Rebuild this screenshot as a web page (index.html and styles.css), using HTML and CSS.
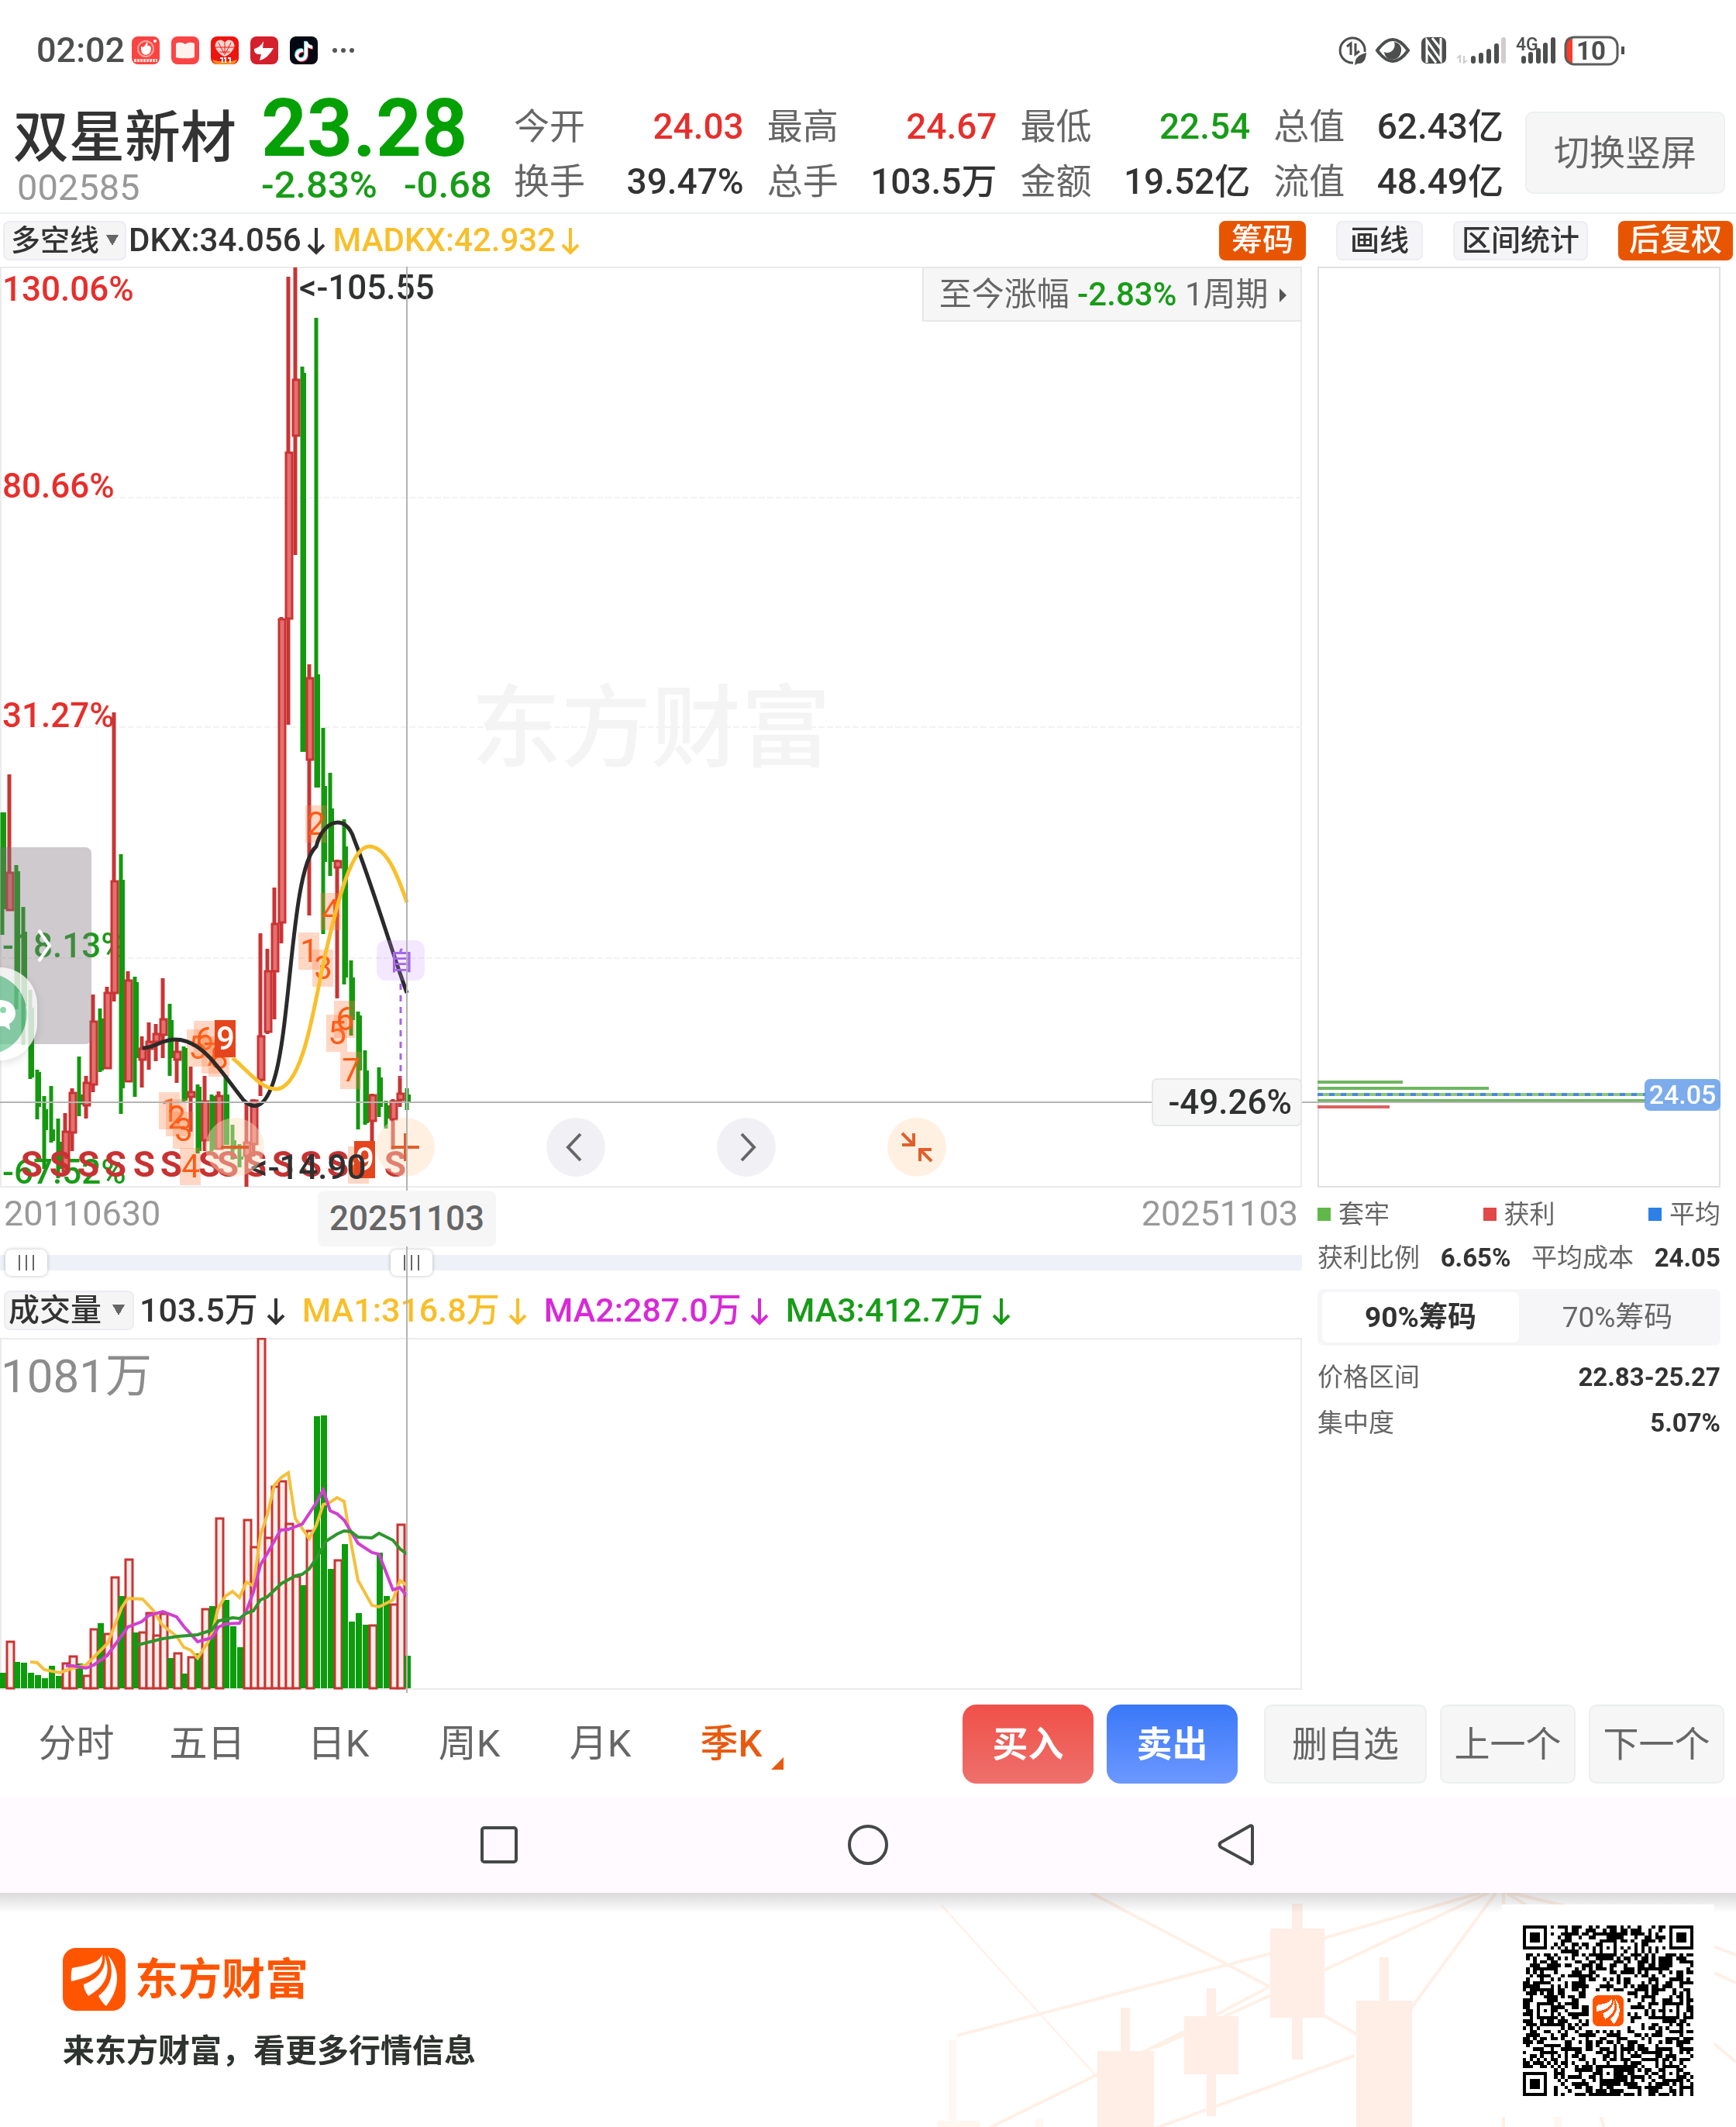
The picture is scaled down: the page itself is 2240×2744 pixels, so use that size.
FILE: index.html
```
<!DOCTYPE html>
<html lang="zh-CN">
  <head>
    <meta charset="utf-8" />
    <meta name="viewport" content="width=device-width, initial-scale=1.0" />
    <title>双星新材 002585</title>
    <link rel="stylesheet" href="styles.css" />
  </head>
  <body>
    <!-- shared symbols -->
    <svg width="0" height="0" class="defs">
      <symbol id="arrow" viewBox="0 0 26 36">
        <path d="M13 1v32M3 23l10 10 10-10" fill="none" stroke="currentColor" stroke-width="4" />
      </symbol>
      <symbol id="logo" viewBox="0 0 81 81">
        <rect width="81" height="81" rx="17" fill="#ff5500" />
        <path
          fill="#fff"
          d="M51 8C47 20 31 22 12 26Q10 34 11 43C35 38 53 30 51 8zM54 9C57 26 46 40 27 47Q27 54 33 62C52 51 64 36 54 9zM58 9C68 32 62 50 46 62Q51 71 56 75C70 58 78 32 58 9z" />
      </symbol>
    </svg>

    <div class="status-bar">
      <span class="clock">02:02</span>
      <div class="app-icons">
        <svg viewBox="0 0 36 36">
          <rect width="36" height="36" rx="8" fill="#fa4442" />
          <circle cx="18" cy="16" r="10" fill="none" stroke="#ffa49c" stroke-width="2" />
          <path d="M12 13q2 1 4 0l4-6q1 3 0 5 4-1 5 3 0 8-7 9-7-1-6-11z" fill="#fff" />
          <circle cx="30" cy="6" r="2" fill="#fff" />
          <path d="M3 31h30" stroke="#ffd8d0" stroke-width="4" stroke-dasharray="3 1" />
        </svg>
        <svg viewBox="0 0 36 36">
          <rect width="36" height="36" rx="8" fill="#fb4446" />
          <path d="M6 9q7-3 12 1 5-4 12-1v18q-7 2-12 1-5 1-12-1z" fill="#fff2ee" />
        </svg>
        <svg viewBox="0 0 36 36">
          <rect width="36" height="36" rx="8" fill="#ee1410" />
          <path d="M2 30q16 5 32 0-2 6-8 6H10q-6 0-8-6z" fill="#ff8a20" />
          <path d="M18 8q4-6 10-2 5 6 0 12-4 6-10 8-6-2-10-8-5-6 0-12 6-4 10 2z" fill="#ffd3cc" />
          <path d="M10 8l7 14M26 8l-7 14M6 14h24M11 20h14M18 8v16" stroke="#ee1410" stroke-width="1" />
          <path d="M12 28h3v6M17 28h2v6M22 28h3v6" fill="none" stroke="#fff" stroke-width="2" />
        </svg>
        <svg viewBox="0 0 36 36">
          <rect width="36" height="36" rx="8" fill="#d4202c" />
          <path d="M17 6l-1 9 14 0Q22 29 12 31l2-8Q4 24 5 16 13 14 17 6z" fill="#fff" />
        </svg>
        <svg viewBox="0 0 36 36">
          <rect width="36" height="36" rx="8" fill="#050812" />
          <g fill="none" stroke-width="4">
            <path d="M16 17q-8 0-8 7 1 5 6 5 6-1 6-7V6q1 6 8 7" stroke="#3ce8e4" />
            <path d="M18 19q-8 0-8 7 1 5 6 5 6-1 6-7V8q1 6 8 7" stroke="#f0305c" />
            <path d="M17 18q-8 0-8 7 1 5 6 5 6-1 6-7V7q1 6 8 7" stroke="#fff" />
          </g>
        </svg>
        <svg viewBox="0 0 36 36">
          <g fill="#555">
            <circle cx="7" cy="18" r="3" />
            <circle cx="18" cy="18" r="3" />
            <circle cx="29" cy="18" r="3" />
          </g>
        </svg>
      </div>
      <svg class="device-icons" viewBox="0 0 376 40">
        <g fill="none" stroke="#4c4f4d" stroke-width="3">
          <path d="M20 36A16 16 0 1 1 35 22" />
          <path d="M12 15l5-4v15M23 11v14l5-4" />
          <path d="M51 20Q71-8 91 20 71 48 51 20z" stroke-width="4" />
        </g>
        <path d="M23 33q2-7 14-10-1 15-11 14l-4 2z" fill="#4c4f4d" />
        <path d="M73 9q10 2 9 12-2 11-12 11-9-1-10-10 6 3 11-2 4-5 2-11z" fill="#4c4f4d" />
        <rect x="108" y="3" width="32" height="34" rx="7" fill="#4c4f4d" />
        <path d="M115 36V7l18 26V4M122 4l11 14M115 20l12 16" fill="none" stroke="#fff" stroke-width="3" />
        <g stroke-width="6" stroke-linecap="round">
          <path d="M175 30v4M185 26v8M195 21v13M205 14v20" stroke="#4c4f4d" />
          <path d="M214 6v28" stroke="#d2ccd0" />
          <path d="M240 30v4M249 25v9M259 20v14M268 13v21M278 6v28" stroke="#4c4f4d" />
        </g>
        <path d="M154 30l4-3v9M163 27v9l4-3" fill="none" stroke="#ccc" stroke-width="2" />
        <text x="230" y="20" font-size="23" font-weight="500" fill="#4c4f4d">4G</text>
        <path d="M303 3h-2q-7 0-7 7v20q0 7 7 7h2z" fill="#fa3c2c" />
        <rect x="294" y="3" width="67" height="35" rx="11" fill="none" stroke="#5a5d5b" stroke-width="3" />
        <path d="M368 15v10" stroke="#4c4f4d" stroke-width="4" />
        <text x="308" y="32" font-size="33" font-weight="700" fill="#4c4f4d">10</text>
      </svg>
    </div>

    <header class="quote">
      <div class="stock">
        <h1>双星新材</h1>
        <span class="code">002585</span>
      </div>
      <div class="price down">
        <strong>23.28</strong>
        <div class="change"><span>-2.83%</span><span>-0.68</span></div>
      </div>
      <dl class="stats">
        <div><dt>今开</dt><dd class="up">24.03</dd></div>
        <div><dt>最高</dt><dd class="up">24.67</dd></div>
        <div><dt>最低</dt><dd class="down">22.54</dd></div>
        <div><dt>总值</dt><dd>62.43亿</dd></div>
        <div><dt>换手</dt><dd>39.47%</dd></div>
        <div><dt>总手</dt><dd>103.5万</dd></div>
        <div><dt>金额</dt><dd>19.52亿</dd></div>
        <div><dt>流值</dt><dd>48.49亿</dd></div>
      </dl>
      <button class="soft-btn rotate">切换竖屏</button>
    </header>

    <div class="toolbar">
      <select class="picker tight" aria-label="主图指标">
        <option>多空线</option>
      </select>
      <span>DKX:34.056<svg class="arrow"><use href="#arrow" /></svg></span>
      <span class="gold">MADKX:42.932<svg class="arrow"><use href="#arrow" /></svg></span>
      <div class="tools">
        <button class="tool on">筹码</button>
        <button class="tool">画线</button>
        <button class="tool">区间统计</button>
        <button class="tool on">后复权</button>
      </div>
    </div>

    <main class="board">
      <section class="charts">
        <div class="price-chart">
          <svg id="kline" viewBox="0 343 1680 1188">
            <rect x="1" y="344" width="1678" height="1186" class="frame" />
            <path d="M0 641H1680M0 937H1680M0 1235H1680" class="grid" />
            <text x="840" y="979" class="watermark">东方财富</text>
            <g class="scale up">
              <text x="3" y="387">130.06%</text>
              <text x="3" y="641">80.66%</text>
              <text x="3" y="937">31.27%</text>
            </g>
            <g class="scale down">
              <text x="3" y="1234">-18.13%</text>
              <text x="3" y="1526">-67.52%</text>
            </g>
            <g id="candles"></g>
            <g id="sells"></g>
            <g id="marks"></g>
            <path
              class="line"
              stroke="#2a2a2a"
              d="M184 1351C200 1351 208 1340 226 1340 262 1340 285 1382 314 1418 328 1432 341 1428 352 1397 376 1330 375 1120 408 1091 416 1058 446 1046 457 1082 480 1140 500 1210 525 1280" />
            <path
              class="line"
              stroke="#f8c02c"
              d="M300 1364C318 1378 336 1404 356 1404 394 1404 408 1275 421 1225 436 1160 454 1091 476 1091 498 1091 512 1125 525 1163" />
            <rect x="486" y="1212" width="62" height="52" rx="12" fill="#c896ff" fill-opacity=".22" />
            <text x="518" y="1250" class="self">自</text>
            <path d="M517 1268V1390" stroke="#a566e8" stroke-width="3" stroke-dasharray="8 7" />
            <path d="M0 1421H1680" class="cross" />
            <g class="scale dark">
              <text x="386" y="385">&lt;-105.55</text>
              <text x="323" y="1520">&lt;-14.90</text>
            </g>
            <rect x="1487" y="1391" width="192" height="60" rx="6" class="tag" />
            <text x="1667" y="1436" class="scale dark end">-49.26%</text>
          </svg>
          <button class="gain">至今涨幅 <b class="down">-2.83%</b> 1周期 <i></i></button>
          <button class="drawer" aria-label="展开">
            <svg viewBox="0 0 20 44"><path d="M2 2l14 20L2 42" fill="none" stroke="#fff" stroke-width="4" /></svg>
          </button>
          <div class="bubble">
            <svg viewBox="0 0 24 44"><path d="M0 4q19 1 20 17 0 9-8 14l1 8-7-5H0z" fill="#fff" /><circle cx="4" cy="17" r="4" fill="#8fd6ae" /></svg>
          </div>
          <div class="chart-nav">
            <button class="round warm" aria-label="缩小"><svg viewBox="0 0 44 44"><path d="M4 22h36" /></svg></button>
            <button class="round warm" aria-label="放大"><svg viewBox="0 0 44 44"><path d="M4 22h36M22 4v36" /></svg></button>
            <button class="round" aria-label="向前"><svg viewBox="0 0 44 44"><path d="M28 5L12 22l16 17" /></svg></button>
            <button class="round" aria-label="向后"><svg viewBox="0 0 44 44"><path d="M16 5l16 17-16 17" /></svg></button>
            <button class="round warm" aria-label="收起">
              <svg viewBox="0 0 44 44"><path d="M3 4l14 14M18 4v15H3M41 40L27 26M26 40V25h15" /></svg>
            </button>
          </div>
        </div>

        <div class="dates">
          <span>20110630</span>
          <span class="current">20251103</span>
          <span>20251103</span>
        </div>

        <div class="range">
          <input type="range" min="0" max="1000" value="4" aria-label="起始日期" />
          <input type="range" min="0" max="1000" value="310" aria-label="结束日期" />
        </div>

        <div class="volume-bar">
          <select class="picker" aria-label="副图指标">
            <option>成交量</option>
          </select>
          <span>103.5万<svg class="arrow"><use href="#arrow" /></svg></span>
          <span class="gold">MA1:316.8万<svg class="arrow"><use href="#arrow" /></svg></span>
          <span class="pink">MA2:287.0万<svg class="arrow"><use href="#arrow" /></svg></span>
          <span class="down">MA3:412.7万<svg class="arrow"><use href="#arrow" /></svg></span>
        </div>

        <svg id="volume" viewBox="0 1725 1680 458">
          <rect x="1" y="1726" width="1678" height="452" class="frame" />
          <text x="1" y="1795" class="peak">1081万</text>
          <g id="bars"></g>
          <g id="averages"></g>
        </svg>
        <div class="crosshair"></div>
      </section>

      <aside class="chips">
        <svg class="chip-chart" viewBox="0 343 520 1188">
          <rect x="1" y="344" width="518" height="1186" class="frame dark-frame" />
          <path d="M0 1395H110M0 1403H221M0 1419H424" stroke="#6fb560" stroke-width="4" />
          <path d="M0 1411H424" stroke="#8cc87c" stroke-width="4" />
          <path d="M0 1411H424" stroke="#4a86e0" stroke-width="4" stroke-dasharray="7 8" />
          <path d="M0 1427H93" stroke="#dc6060" stroke-width="4" />
          <path d="M-20 1421H520" class="cross" />
          <rect x="422" y="1391" width="98" height="41" rx="7" fill="#6fa3ea" fill-opacity=".9" />
          <text x="471" y="1423" class="avg">24.05</text>
        </svg>
        <ul class="legend">
          <li class="l-green">套牢</li>
          <li class="l-red">获利</li>
          <li class="l-blue">平均</li>
        </ul>
        <p class="pair"><span>获利比例</span><b>6.65%</b><span>平均成本</span><b>24.05</b></p>
        <div class="switch">
          <button class="active">90%筹码</button>
          <button>70%筹码</button>
        </div>
        <p class="pair"><span>价格区间</span><b>22.83-25.27</b></p>
        <p class="pair last"><span>集中度</span><b>5.07%</b></p>
      </aside>
    </main>

    <div class="bottom-bar">
      <nav class="periods">
        <button>分时</button>
        <button>五日</button>
        <button>日K</button>
        <button>周K</button>
        <button>月K</button>
        <button class="active">季K</button>
      </nav>
      <div class="actions">
        <button class="buy">买入</button>
        <button class="sell">卖出</button>
        <button class="soft-btn wide">删自选</button>
        <button class="soft-btn">上一个</button>
        <button class="soft-btn">下一个</button>
      </div>
    </div>

    <div class="system-nav">
      <svg viewBox="0 0 56 56"><rect x="6" y="6" width="44" height="44" rx="3" /></svg>
      <svg viewBox="0 0 56 56"><circle cx="28" cy="28" r="24" /></svg>
      <svg viewBox="0 0 56 56"><path d="M48 5v46Q47 54 44 51L7 31Q4 28 7 25L44 4Q47 2 48 5z" /></svg>
    </div>

    <footer class="banner">
      <!-- faint candles behind the footer -->
      <svg class="banner-art" viewBox="0 0 1120 304">
        <g fill="none" stroke="#fff0e6" stroke-width="4">
          <path d="M288 0L520 122M115 184L520 78 790 0M370 200L520 132 800 0M370 304L628 210M155 304L410 178 520 120M700 150L810 0M820 0V304M824 0L878 34M830 0L970 34M1072 62L1120 80M1072 178L1120 218M1072 94L1120 116M588 158L630 182M940 270L950 304" />
          <path d="M95 16L298 240" stroke-width="2" />
        </g>
        <g fill="#ffeee6">
          <path d="M547 14h14v32h28v115h-28v54h-14v-54h-28V46h28z" />
          <path d="M326 148h12v56h31v100h-73V204h30z" />
          <path d="M437 123h12v36h29v75h-29v54h-12v-54h-29v-75h29z" />
          <path d="M660 83h12v56h30v165h-72V139h30z" />
          <path d="M104 190h10v104h30v10H90v-10h14zM216 292h10v12h-10zM885 270h10v34h-10z" fill="#fff7f0" />
        </g>
      </svg>
      <div class="brand">
        <div class="brand-name">
          <svg><use href="#logo" /></svg>
          <span>东方财富</span>
        </div>
        <p>来东方财富，看更多行情信息</p>
      </div>
      <svg class="qr" viewBox="-6 -6 61 61">
        <rect x="-6" y="-6" width="61" height="61" fill="#fff" />
        <path id="qr-dots" />
        <rect x="19" y="19" width="11" height="11" fill="#fff" />
        <use href="#logo" x="20" y="20" width="9" height="9" />
      </svg>
    </footer>

    <script src="script.js"></script>
  </body>
</html>
```
FILE: styles.css
```
* {
  box-sizing: border-box;
}

body {
  margin: 0;
  background: #fff;
  color: #333;
  font-family: Roboto, "Noto Sans CJK SC", sans-serif;
  font-size: 40px;
  line-height: 52px;
}

button,
select {
  font: inherit;
  color: inherit;
  border: 0;
  padding: 0;
  background: none;
  white-space: nowrap;
}

h1,
p,
dl,
dd,
ul {
  margin: 0;
  padding: 0;
}

svg {
  display: block;
}

.defs {
  position: absolute;
}

.up {
  color: #e62f2c;
  fill: #e62f2c;
}

.down {
  color: #189c18;
  fill: #189c18;
}

.gold {
  color: #f8bf2a;
}

.pink {
  color: #d829d8;
}

/* status bar */
.status-bar {
  display: flex;
  align-items: center;
  padding: 38px 138px 18px 47px;
}

.clock {
  font-size: 45px;
  line-height: 54px;
  font-weight: 500;
  color: #4c4f4d;
}

.app-icons {
  display: flex;
  gap: 15px;
  margin-left: 9px;
}

.app-icons svg {
  width: 36px;
  height: 36px;
}

.device-icons {
  width: 376px;
  height: 40px;
  margin-left: auto;
}

/* quote header */
.quote {
  display: flex;
  align-items: flex-start;
  padding: 18px 14px 0 17px;
  border-bottom: 2px solid #eceff0;
}

.stock {
  width: 320px;
  padding-top: 10px;
}

.stock h1 {
  font-size: 72px;
  line-height: 80px;
  font-weight: 500;
}

.code {
  display: block;
  padding-left: 5px;
  font-size: 47px;
  line-height: 48px;
  color: #999;
}

.price {
  width: 326px;
}

.price strong {
  display: block;
  font-size: 103px;
  line-height: 76px;
  color: #04a004;
}

.change {
  display: flex;
  gap: 34px;
  font-size: 49px;
  line-height: 70px;
  font-weight: 500;
}

.stats {
  flex: 1;
  display: grid;
  grid-template-columns: repeat(4, 1fr);
  column-gap: 30px;
  font-size: 46px;
  line-height: 71px;
}

.stats div {
  display: flex;
  justify-content: space-between;
}

.stats dt {
  color: #666;
}

.stats dd {
  font-weight: 500;
}

.soft-btn {
  height: 102px;
  padding: 0 24px;
  border: 2px solid #eceff0;
  border-radius: 10px;
  background: #f6f6f7;
  color: #666;
  font-size: 46px;
}

.rotate {
  width: 258px;
  height: 106px;
  margin: 16px 0 0 28px;
}

/* indicator row */
.toolbar {
  display: flex;
  align-items: center;
  gap: 3px;
  padding: 8px 4px;
  font-size: 42px;
  font-weight: 500;
}

.toolbar span {
  margin-right: 6px;
}

.picker {
  appearance: none;
  width: 168px;
  height: 51px;
  padding-left: 4px;
  border: 2px solid #ebedf2;
  border-radius: 8px;
  background: #f5f5f6 conic-gradient(from -30deg at 50% 100%, #666 60deg, transparent 0) no-repeat right 10px center / 16px 14px;
  font-size: 40px;
  line-height: 47px;
}

.picker.tight {
  width: 159px;
  padding-left: 8px;
  background-position: right 8px center;
  font-size: 38px;
}

.arrow {
  display: inline-block;
  width: 26px;
  height: 36px;
  margin-left: 6px;
  vertical-align: -5px;
}

.tools {
  display: flex;
  gap: 39px;
  margin-left: auto;
}

.tool {
  min-width: 112px;
  height: 51px;
  padding: 0 9px;
  border: 2px solid #eceef3;
  border-radius: 8px;
  background: #f5f5f7;
  font-size: 38px;
  line-height: 44px;
}

.tool.on {
  padding: 0 12px;
  border-color: #e85500;
  background: #e85500;
  color: #fff;
  font-size: 40px;
}

/* charts */
.board {
  display: grid;
  grid-template-columns: 3fr 1fr;
}

.charts {
  position: relative;
}

.price-chart {
  position: relative;
}

.frame {
  fill: none;
  stroke: #ebebeb;
  stroke-width: 2;
}

.dark-frame {
  stroke: #dfe2df;
}

.grid {
  stroke: #f2f2f2;
  stroke-width: 2;
  stroke-dasharray: 8 3;
}

.watermark {
  font-size: 116px;
  font-weight: 500;
  text-anchor: middle;
  fill: #f4f4f4;
}

.scale {
  font-size: 44px;
  font-weight: 500;
}

.dark {
  fill: #2f3030;
}

.end {
  text-anchor: end;
}

.line {
  fill: none;
  stroke-width: 5;
}

.cross {
  stroke: #b4b4b4;
  stroke-width: 2;
}

.tag {
  fill: #f6f6f7;
  stroke: #e6e8e8;
  stroke-width: 2;
}

.self {
  font-size: 32px;
  font-weight: 500;
  text-anchor: middle;
  fill: #a566f0;
}

.sell-mark {
  font-size: 46px;
  font-weight: 700;
  text-anchor: middle;
  fill: #c83232;
}

.count {
  font-size: 42px;
  text-anchor: middle;
  fill: #ff5a14;
}

.count.nine {
  fill: #fff;
  font-weight: 500;
}

.crosshair {
  position: absolute;
  top: 0;
  bottom: 0;
  left: 31.25%;
  width: 2px;
  margin-left: -1px;
  background: #b4b4b4;
}

.gain {
  position: absolute;
  top: 0;
  right: 0;
  height: 71px;
  padding: 0 18px 0 20px;
  border: 2px solid #e6e8e8;
  background: #f6f6f7;
  color: #666;
  font-size: 42px;
}

.gain b {
  font-weight: 500;
}

.gain i {
  display: inline-block;
  margin-left: 4px;
  border: 9px solid transparent;
  border-left-color: #555;
  border-right-width: 0;
  vertical-align: 4px;
}

.drawer {
  position: absolute;
  top: 749px;
  left: 0;
  width: 118px;
  height: 254px;
  padding-left: 48px;
  border-radius: 0 8px 8px 0;
  background: rgba(125, 115, 125, 0.38);
}

.drawer svg {
  width: 20px;
  height: 44px;
}

.bubble {
  position: absolute;
  top: 904px;
  left: 0;
  width: 48px;
  height: 120px;
  padding: 38px 0;
  border-radius: 0 60px 60px 0;
  background: radial-gradient(circle at -18px 60px, rgba(100, 200, 145, 0.7) 52px, rgba(255, 255, 255, 0.75) 53px);
  box-shadow: 0 4px 12px rgba(0, 0, 0, 0.12);
}

.bubble svg {
  width: 24px;
  height: 44px;
}

.chart-nav {
  position: absolute;
  bottom: 14px;
  left: 265px;
  display: flex;
  gap: 144px;
}

.round {
  display: grid;
  place-items: center;
  width: 76px;
  height: 76px;
  border-radius: 50%;
  background: rgba(228, 228, 236, 0.5);
  color: #666;
}

.round.warm {
  background: rgba(255, 222, 190, 0.45);
  color: #e0602c;
}

.round svg {
  width: 44px;
  height: 44px;
  fill: none;
  stroke: currentColor;
  stroke-width: 4;
}

/* date axis */
.dates {
  display: flex;
  justify-content: space-between;
  padding: 8px 5px 20px 5px;
  font-size: 45px;
  line-height: 52px;
  color: #999;
}

.dates .current {
  position: absolute;
  left: 31.25%;
  z-index: 1;
  transform: translateX(-50%);
  margin-top: -4px;
  padding: 10px 15px;
  border-radius: 8px;
  background: #f6f6f7;
  color: #666;
  font-size: 44px;
  font-weight: 500;
}

.range {
  display: grid;
  align-items: center;
  height: 34px;
  background: linear-gradient(#eef1f7, #eef1f7) no-repeat center / 100% 20px;
  border-radius: 10px;
}

.range input {
  grid-area: 1 / 1;
  appearance: none;
  width: 100%;
  height: 34px;
  margin: 0;
  background: none;
  pointer-events: none;
}

.range input::-webkit-slider-thumb {
  appearance: none;
  pointer-events: auto;
  width: 54px;
  height: 34px;
  border-radius: 8px;
  background: repeating-linear-gradient(90deg, #666 0 2px, #fff 2px 9px) no-repeat center / 20px 20px #fff;
  box-shadow: 0 0 5px rgba(0, 0, 0, 0.25);
}

.volume-bar {
  display: flex;
  align-items: center;
  gap: 7px;
  padding: 18px 5px 10px;
  font-size: 43px;
  font-weight: 500;
}

.volume-bar span {
  margin-right: 14px;
}

.volume-bar .arrow {
  margin-left: 10px;
}

.peak {
  font-size: 60px;
  fill: #8c8c8c;
}

/* chip panel */
.chips {
  padding: 0 20px;
  font-size: 33px;
  color: #666;
}

.chip-chart {
  overflow: visible;
}

.avg {
  font-size: 34px;
  font-weight: 500;
  text-anchor: middle;
  fill: #fff;
}

.legend {
  display: flex;
  justify-content: space-between;
  padding-top: 9px;
  list-style: none;
}

.legend li::before {
  content: "";
  display: inline-block;
  width: 17px;
  height: 17px;
  margin-right: 10px;
  vertical-align: 3px;
  background: #5fb848;
}

.legend .l-red::before {
  background: #e24848;
}

.legend .l-blue::before {
  background: #2d80e6;
}

.pair {
  display: flex;
  justify-content: space-between;
  padding-top: 4px;
}

.pair b {
  color: #333;
}

.pair.last {
  padding-top: 7px;
}

.switch {
  display: grid;
  grid-template-columns: 1fr 1fr;
  margin: 14px 0 11px;
  padding: 4px 6px;
  border-radius: 8px;
  background: #f6f6f8;
}

.switch button {
  border-radius: 8px;
  font-size: 37px;
  line-height: 65px;
}

.switch .active {
  background: #fff;
  color: #333;
  font-weight: 700;
}

/* bottom bar */
.bottom-bar {
  display: flex;
  justify-content: space-between;
  align-items: center;
  padding: 15px 15px 17px 14px;
}

.periods {
  display: flex;
}

.periods button {
  position: relative;
  width: 169px;
  font-size: 49px;
  color: #666;
}

.periods .active {
  color: #e85a10;
  font-weight: 500;
}

.periods .active::after {
  content: "";
  position: absolute;
  right: 17px;
  bottom: -7px;
  border: 8px solid #e85a10;
  border-top-color: transparent;
  border-left-color: transparent;
}

.actions {
  display: flex;
  gap: 17px;
}

.actions .soft-btn {
  width: 175px;
  padding: 0;
}

.actions .wide {
  width: 210px;
  margin-left: 17px;
}

.buy,
.sell {
  width: 169px;
  height: 102px;
  border-radius: 18px;
  background: linear-gradient(#f05048, #ee706c);
  color: #fff;
  font-size: 46px;
  font-weight: 700;
}

.sell {
  background: linear-gradient(#3a78f8, #6c98ff);
}

.system-nav {
  display: flex;
  justify-content: center;
  gap: 420px;
  padding: 34px 0;
  background: #fefaff;
}

.system-nav svg {
  width: 56px;
  height: 56px;
  fill: none;
  stroke: #444746;
  stroke-width: 4;
}

/* footer banner */
.banner {
  position: relative;
  display: flex;
  justify-content: space-between;
  padding: 15px 28px 15px 81px;
  background: linear-gradient(#dadada, #fff 26px);
}

.banner-art {
  position: absolute;
  top: 0;
  right: 0;
  width: 50%;
  mix-blend-mode: multiply;
}

.brand {
  padding-top: 56px;
}

.brand-name {
  display: flex;
  align-items: center;
  gap: 12px;
  color: #ff5500;
  font-size: 56px;
  font-weight: 700;
}

.brand-name svg {
  width: 81px;
  height: 81px;
}

.brand p {
  margin-top: 26px;
  font-size: 41px;
  font-weight: 700;
  color: #2f332f;
}

.qr {
  position: relative;
  width: 274px;
  height: 274px;
  shape-rendering: crispEdges;
}
```
FILE: script.js
```
const RED = "#c93434";
const GREEN = "#14980f";
const STEP = 9;

// [up?, high, body top, body bottom, low]
const candles = [
  [0, 1047, 1047, 1172, 1205], [1, 998, 1124, 1174, 1174], [0, 1115, 1123, 1278, 1301],
  [0, 1169, 1201, 1297, 1347], [0, 1276, 1299, 1389, 1391], [0, 1379, 1382, 1427, 1443],
  [0, 1413, 1430, 1457, 1507], [0, 1400, 1456, 1471, 1473], [0, 1442, 1472, 1507, 1519],
  [1, 1435, 1458, 1511, 1514], [1, 1403, 1408, 1461, 1484], [0, 1362, 1411, 1424, 1439],
  [1, 1387, 1395, 1426, 1442], [1, 1282, 1316, 1399, 1408], [0, 1300, 1313, 1380, 1382],
  [1, 1272, 1279, 1378, 1378], [1, 918, 1135, 1281, 1291], [0, 1101, 1134, 1403, 1436],
  [1, 1252, 1263, 1395, 1395], [0, 1259, 1266, 1364, 1414], [1, 1336, 1351, 1367, 1402],
  [1, 1318, 1342, 1353, 1379], [1, 1320, 1332, 1344, 1368], [1, 1261, 1313, 1335, 1364],
  [0, 1294, 1315, 1364, 1387], [1, 1342, 1355, 1367, 1396], [0, 1349, 1351, 1419, 1420],
  [1, 1375, 1407, 1415, 1459], [0, 1398, 1401, 1484, 1487], [1, 1387, 1419, 1471, 1484],
  [0, 1411, 1413, 1482, 1484], [1, 1407, 1412, 1482, 1482], [0, 1386, 1411, 1476, 1476],
  [0, 1450, 1470, 1482, 1495], [0, 1475, 1491, 1495, 1505], [1, 1421, 1472, 1491, 1530],
  [1, 1417, 1418, 1476, 1491], [1, 1203, 1335, 1393, 1413], [1, 1223, 1251, 1331, 1333],
  [1, 1144, 1190, 1253, 1314], [1, 795, 797, 1190, 1216], [1, 356, 582, 798, 934],
  [1, 344, 488, 562, 715], [0, 472, 480, 969, 969], [1, 856, 873, 980, 1180],
  [0, 409, 869, 1015, 1015], [0, 938, 1013, 1111, 1204], [0, 996, 1042, 1111, 1129],
  [1, 1108, 1109, 1119, 1287], [0, 1056, 1091, 1260, 1269], [0, 1238, 1260, 1315, 1335],
  [0, 1304, 1309, 1380, 1456], [0, 1354, 1380, 1448, 1450], [1, 1410, 1411, 1446, 1487],
  [0, 1376, 1389, 1427, 1440], [0, 1419, 1425, 1442, 1455], [1, 1417, 1419, 1444, 1482],
  [1, 1387, 1409, 1419, 1427], [0, 1403, 1411, 1421, 1431],
];

const volumes = [
  20, 61, 34, 33, 20, 17, 13, 29, 16, 33, 42, 32, 17, 77, 84, 71, 144, 119, 167, 72,
  73, 98, 69, 97, 39, 46, 19, 41, 45, 103, 106, 220, 114, 80, 53, 218, 183, 452, 195,
  261, 268, 213, 145, 133, 204, 351, 352, 154, 166, 186, 86, 97, 82, 82, 175, 119,
  109, 212, 42,
];

// nine-turn counts: [x, y, n]
const counts = [
  [205, 1408, 1], [214, 1417, 2], [223, 1433, 3], [232, 1480, 4], [241, 1327, 5],
  [250, 1316, 6], [260, 1336, 7], [269, 1340, 8], [277, 1315, 9],
  [385, 1202, 1], [394, 1038, 2], [403, 1224, 3], [413, 1151, 4], [421, 1308, 5],
  [431, 1290, 6], [439, 1356, 7], [449, 1478, 8], [457, 1471, 9],
];

const sells = [41, 78, 114, 149, 186, 221, 270, 294, 330, 365, 401, 436, 510];

const averages = {
  "#f4c03c": "39,2143 48,2144 57,2153 77,2157 94,2151 111,2147 130,2128 139,2119 157,2073 165,2061 184,2062 199,2078 209,2095 228,2110 237,2124 246,2128 255,2138 268,2118 274,2105 281,2075 291,2058 300,2052 309,2060 318,2040 327,2045 336,1980 345,1953 354,1915 363,1905 372,1899 381,1958 399,1984 408,1967 417,1940 426,1937 435,1931 444,1936 453,1990 462,2038 480,2070 489,2072 507,2063 516,2038 525,2044",
  "#d040d0": "85,2148 94,2148 111,2151 121,2147 138,2135 147,2123 165,2098 183,2091 192,2083 210,2078 228,2085 237,2097 255,2117 273,2112 282,2098 291,2094 309,2093 318,2077 327,2053 336,2018 345,2003 362,1973 372,1972 390,1965 408,1938 417,1921 426,1948 435,1952 444,1960 462,1990 480,2002 489,2004 507,2050 516,2047 525,2058",
  "#2c962c": "178,2121 210,2113 230,2110 255,2108 273,2102 282,2090 300,2086 309,2087 318,2080 327,2077 336,2063 345,2059 363,2042 381,2032 390,2030 399,2023 408,2010 421,1987 435,1978 444,1974 453,1975 462,1982 480,1983 489,1977 507,1986 516,1997 525,2004",
};

let html = "";
candles.forEach(([up, high, top, bottom, low], i) => {
  const x = 3 + i * STEP;
  const color = up ? RED : GREEN;
  html += `<path d="M${x} ${high}V${low}" stroke="${color}" stroke-width="5"/>`;
  html += up
    ? `<rect x="${x - 3}" y="${top + 1}" width="8" height="${Math.max(bottom - top - 2, 3)}" fill="#e57070" stroke="${RED}" stroke-width="3"/>`
    : `<rect x="${x - 2}" y="${top}" width="7" height="${bottom - top}" fill="${GREEN}"/>`;
});
document.getElementById("candles").innerHTML = html;

html = "";
volumes.forEach((h, i) => {
  const x = 3 + i * STEP;
  html += candles[i][0]
    ? `<rect x="${x - 3}" y="${2178 - h}" width="9" height="${h - 1}" fill="#ffeeea" stroke="${RED}" stroke-width="3"/>`
    : `<rect x="${x - 3}" y="${2177 - h}" width="8" height="${h}" fill="#0c9c0c"/>`;
});
document.getElementById("bars").innerHTML = html;

html = "";
for (const color in averages) {
  html += `<polyline class="line" style="stroke-width:4" stroke="${color}" points="${averages[color]}"/>`;
}
document.getElementById("averages").innerHTML = html;

document.getElementById("sells").innerHTML = sells
  .map((x) => `<text x="${x}" y="1517" class="sell-mark">S</text>`)
  .join("");

document.getElementById("marks").innerHTML = counts
  .map(([x, y, n]) => {
    const nine = n === 9;
    return `<rect x="${x}" y="${y}" width="27" height="48" fill="${nine ? "#e5451c" : "#ff8246"}" fill-opacity="${nine ? 1 : 0.32}"/>
      <text x="${x + 14}" y="${y + 38}" class="count ${nine ? "nine" : ""}">${n}</text>`;
  })
  .join("");

// QR code, 49 modules a side
const SIZE = 49;
let seed = 2585;
const next = () => (seed = (seed * 1103515245 + 12345) % 2147483648) / 2147483648;
const ring = (x, y, cx, cy, r) => {
  const d = Math.max(Math.abs(x - cx), Math.abs(y - cy));
  return d > r ? null : d;
};
const finders = [[3, 3], [45, 3], [3, 45]];
const aligns = [[24, 6], [6, 24], [42, 24], [24, 42], [42, 42]];
let dots = "";
for (let y = 0; y < SIZE; y++) {
  for (let x = 0; x < SIZE; x++) {
    let on = next() > 0.5;
    if (y === 6 || x === 6) on = (x + y) % 2 === 0;
    finders.forEach(([cx, cy]) => {
      const d = ring(x, y, cx, cy, 4);
      if (d !== null) on = d !== 2 && d !== 4;
    });
    aligns.forEach(([cx, cy]) => {
      const d = ring(x, y, cx, cy, 2);
      if (d !== null) on = d !== 1;
    });
    if (on) dots += `M${x} ${y}h1v1h-1z`;
  }
}
document.getElementById("qr-dots").setAttribute("d", dots);
```
